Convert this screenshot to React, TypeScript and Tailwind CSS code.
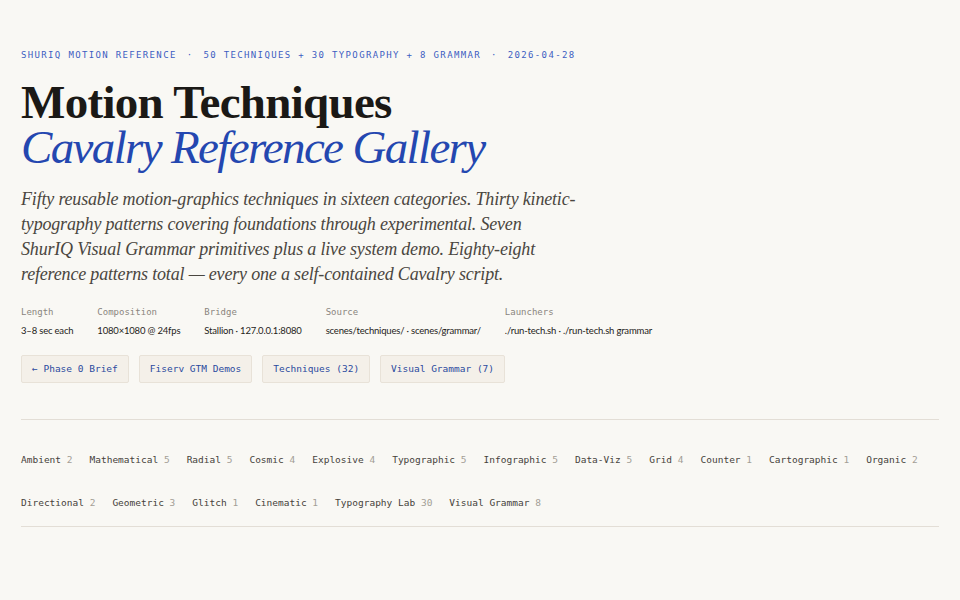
const mono = "font-['DejaVu_Sans_Mono','Liberation_Mono',monospace]";
const serif = "font-['Liberation_Serif','DejaVu_Serif',serif]";

const meta = [
  { label: 'Length', value: '3–8 sec each' },
  { label: 'Composition', value: '1080×1080 @ 24fps' },
  { label: 'Bridge', value: 'Stallion · 127.0.0.1:8080' },
  { label: 'Source', value: 'scenes/techniques/ · scenes/grammar/' },
  { label: 'Launchers', value: './run-tech.sh · ./run-tech.sh grammar' },
];

const links = ['← Phase 0 Brief', 'Fiserv GTM Demos', 'Techniques (32)', 'Visual Grammar (7)'];

const categories: [string, number][] = [
  ['Ambient', 2],
  ['Mathematical', 5],
  ['Radial', 5],
  ['Cosmic', 4],
  ['Explosive', 4],
  ['Typographic', 5],
  ['Infographic', 5],
  ['Data-Viz', 5],
  ['Grid', 4],
  ['Counter', 1],
  ['Cartographic', 1],
  ['Organic', 2],
  ['Directional', 2],
  ['Geometric', 3],
  ['Glitch', 1],
  ['Cinematic', 1],
  ['Typography Lab', 30],
  ['Visual Grammar', 8],
];

export default function App() {
  return (
    <div className="min-h-screen bg-[#f9f8f4] px-[21px] pt-[49px]">
      {/* eyebrow */}
      <p className={`${mono} text-[9px] leading-3 tracking-[0.15em] text-[#3d5ec2]`}>
        SHURIQ MOTION REFERENCE<span className="mx-2.5">·</span>50 TECHNIQUES + 30 TYPOGRAPHY + 8 GRAMMAR
        <span className="mx-2.5">·</span>2026-04-28
      </p>

      <h1 className={`${serif} mt-[19px] text-[47px] font-bold leading-[45px] tracking-[-0.015em] text-[#1b1916]`}>
        Motion Techniques
        <br />
        <em className="font-normal tracking-[-0.035em] text-[#2447b0]">Cavalry Reference Gallery</em>
      </h1>

      <p className={`${serif} mt-[17px] max-w-[566px] text-[18px] italic leading-[25px] tracking-[-0.01em] text-[#4a4640]`}>
        Fifty reusable motion-graphics techniques in sixteen categories. Thirty kinetic-typography patterns covering
        foundations through experimental. Seven ShurIQ&nbsp;Visual Grammar primitives plus a live system demo.
        Eighty-eight reference patterns total — every one a self-contained Cavalry script.
      </p>

      {/* meta */}
      <div className="mt-[19px] flex gap-6">
        {meta.map((m) => (
          <div key={m.label} className="flex flex-col gap-1.5">
            <span className={`${mono} text-[9px] leading-3 text-[#8a857e]`}>{m.label}</span>
            <span className="font-['Lato','Liberation_Sans',sans-serif] text-[9.5px] leading-[14px] tracking-[-0.02em] text-[#1f1d1a]">
              {m.value}
            </span>
          </div>
        ))}
      </div>

      {/* links */}
      <div className="mt-[17px] flex gap-2.5">
        {links.map((l) => (
          <a
            key={l}
            className={`${mono} flex h-7 items-center rounded-[2px] border border-[#e8e2d8] bg-[#f4f0e9] px-2.5 text-[9.5px] text-[#2b4a9e]`}
          >
            {l}
          </a>
        ))}
      </div>

      {/* categories */}
      <div className="mt-9 border-y border-[#e3ded6] pb-[11px] pt-[28px]">
        <div className="flex flex-wrap gap-x-[17px] gap-y-[19px]">
          {categories.map(([name, n]) => (
            <span key={name} className={`${mono} h-6 text-[9.5px] leading-6 text-[#46423b]`}>
              {name} <span className="text-[#a39e96]">{n}</span>
            </span>
          ))}
        </div>
      </div>
    </div>
  );
}
